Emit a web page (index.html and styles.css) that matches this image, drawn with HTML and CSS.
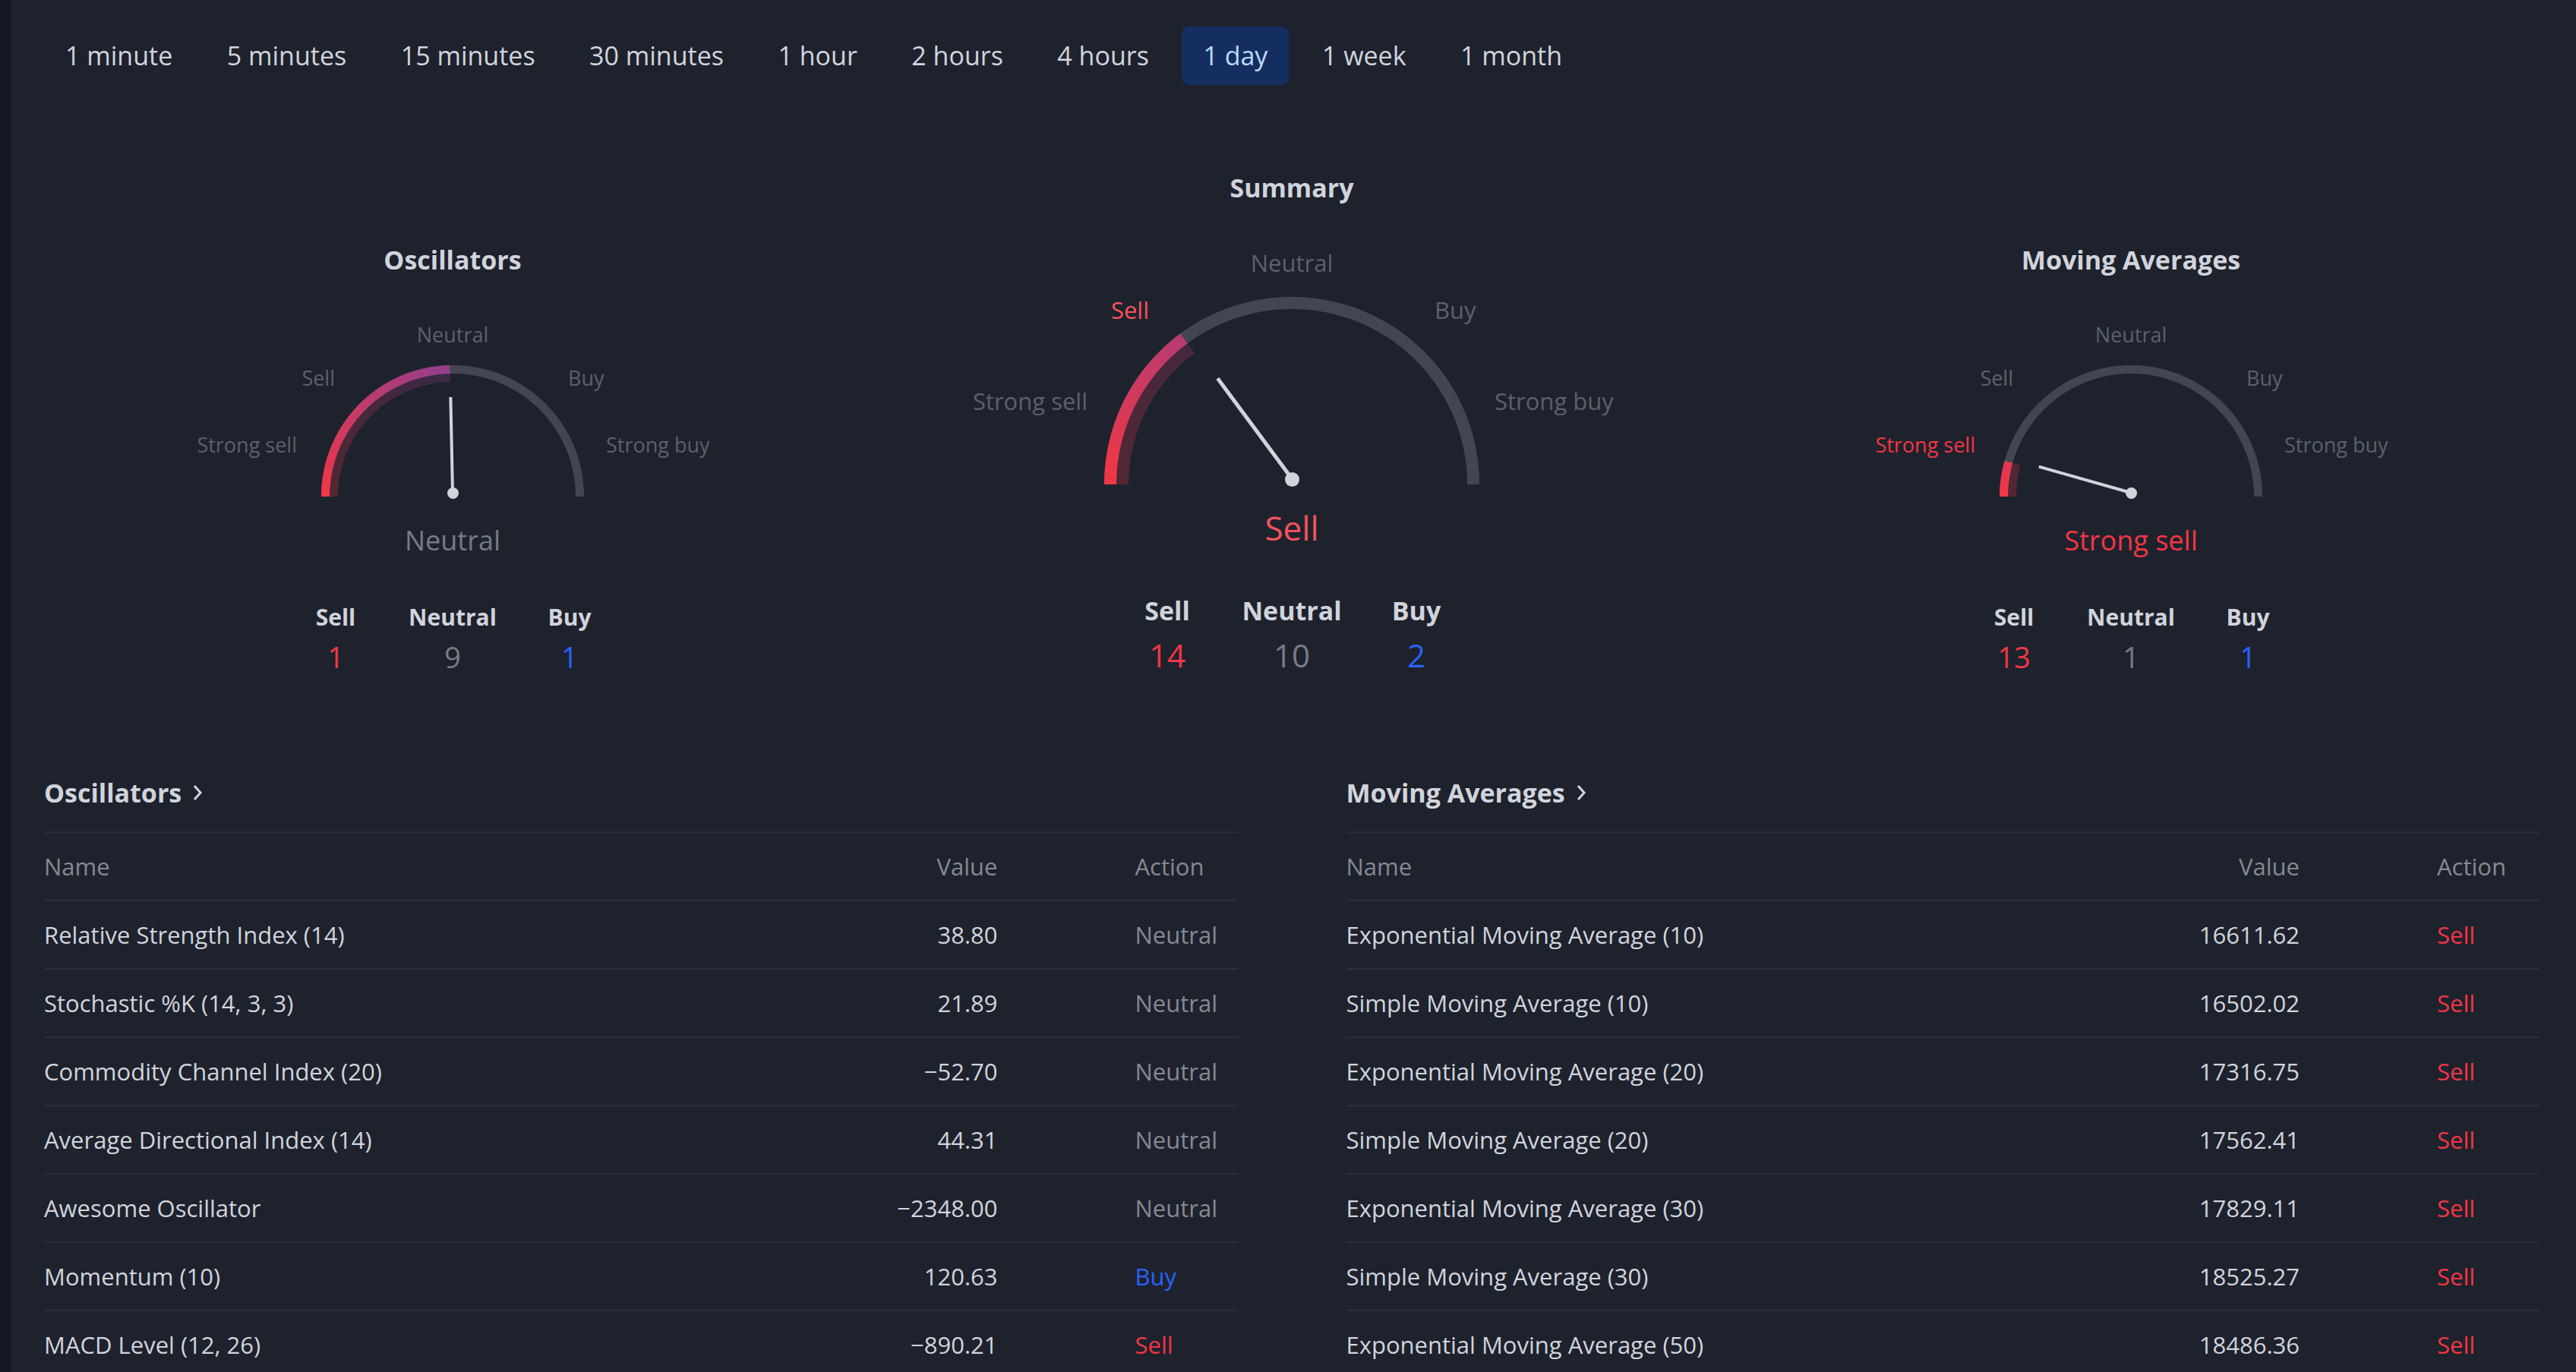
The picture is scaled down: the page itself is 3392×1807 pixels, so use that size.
FILE: index.html
```html
<!DOCTYPE html>
<html lang="en">
<head>
<meta charset="utf-8">
<title>Technical analysis</title>
<link rel="stylesheet" href="styles.css">
</head>
<body>
<div class="app">
  <aside class="strip"></aside>
  <main class="main">
    <nav class="tabs">
      <div class="tab">1 minute</div>
      <div class="tab">5 minutes</div>
      <div class="tab">15 minutes</div>
      <div class="tab">30 minutes</div>
      <div class="tab">1 hour</div>
      <div class="tab">2 hours</div>
      <div class="tab">4 hours</div>
      <div class="tab tab--active">1 day</div>
      <div class="tab">1 week</div>
      <div class="tab">1 month</div>
    </nav>

    <section class="gauges">
      <div class="gauge-col gauge-col--sm">
        <h3 class="gauge-title">Oscillators</h3>
        <div class="gauge" style="--v: 88.8deg">
          <div class="gauge-track"></div>
          <div class="gauge-cut"><div class="gauge-fill"></div></div>
          <span class="gl gl-ss">Strong sell</span>
          <span class="gl gl-s">Sell</span>
          <span class="gl gl-n">Neutral</span>
          <span class="gl gl-b">Buy</span>
          <span class="gl gl-sb">Strong buy</span>
          <div class="needle"></div>
          <div class="pivot"></div>
        </div>
        <div class="gauge-result">Neutral</div>
        <div class="counts">
          <div class="count"><span class="count-label">Sell</span><span class="count-num c-sell">1</span></div>
          <div class="count"><span class="count-label">Neutral</span><span class="count-num c-neutral">9</span></div>
          <div class="count"><span class="count-label">Buy</span><span class="count-num c-buy">1</span></div>
        </div>
      </div>

      <div class="gauge-col gauge-col--lg">
        <h3 class="gauge-title">Summary</h3>
        <div class="gauge" style="--v: 53.5deg">
          <div class="gauge-track"></div>
          <div class="gauge-cut"><div class="gauge-fill"></div></div>
          <span class="gl gl-ss">Strong sell</span>
          <span class="gl gl-s gl--sell">Sell</span>
          <span class="gl gl-n">Neutral</span>
          <span class="gl gl-b">Buy</span>
          <span class="gl gl-sb">Strong buy</span>
          <div class="needle"></div>
          <div class="pivot"></div>
        </div>
        <div class="gauge-result gauge-result--sell">Sell</div>
        <div class="counts">
          <div class="count"><span class="count-label">Sell</span><span class="count-num c-sell">14</span></div>
          <div class="count"><span class="count-label">Neutral</span><span class="count-num c-neutral">10</span></div>
          <div class="count"><span class="count-label">Buy</span><span class="count-num c-buy">2</span></div>
        </div>
      </div>

      <div class="gauge-col gauge-col--sm">
        <h3 class="gauge-title">Moving Averages</h3>
        <div class="gauge" style="--v: 15.8deg">
          <div class="gauge-track"></div>
          <div class="gauge-cut"><div class="gauge-fill"></div></div>
          <span class="gl gl-ss gl--strong-sell">Strong sell</span>
          <span class="gl gl-s">Sell</span>
          <span class="gl gl-n">Neutral</span>
          <span class="gl gl-b">Buy</span>
          <span class="gl gl-sb">Strong buy</span>
          <div class="needle"></div>
          <div class="pivot"></div>
        </div>
        <div class="gauge-result gauge-result--strong-sell">Strong sell</div>
        <div class="counts">
          <div class="count"><span class="count-label">Sell</span><span class="count-num c-sell">13</span></div>
          <div class="count"><span class="count-label">Neutral</span><span class="count-num c-neutral">1</span></div>
          <div class="count"><span class="count-label">Buy</span><span class="count-num c-buy">1</span></div>
        </div>
      </div>
    </section>

    <section class="tables">
      <div class="panel">
        <h3 class="panel-title">Oscillators<svg class="chev" viewBox="0 0 14 22" width="14" height="22"><polyline points="3,2 11,11 3,20" fill="none" stroke="currentColor" stroke-width="3"/></svg></h3>
        <div class="tbl">
          <div class="tr th"><span>Name</span><span class="num">Value</span><span>Action</span></div>
          <div class="tr"><span>Relative Strength Index (14)</span><span class="num">38.80</span><span class="a-neutral">Neutral</span></div>
          <div class="tr"><span>Stochastic %K (14, 3, 3)</span><span class="num">21.89</span><span class="a-neutral">Neutral</span></div>
          <div class="tr"><span>Commodity Channel Index (20)</span><span class="num">−52.70</span><span class="a-neutral">Neutral</span></div>
          <div class="tr"><span>Average Directional Index (14)</span><span class="num">44.31</span><span class="a-neutral">Neutral</span></div>
          <div class="tr"><span>Awesome Oscillator</span><span class="num">−2348.00</span><span class="a-neutral">Neutral</span></div>
          <div class="tr"><span>Momentum (10)</span><span class="num">120.63</span><span class="a-buy">Buy</span></div>
          <div class="tr"><span>MACD Level (12, 26)</span><span class="num">−890.21</span><span class="a-sell">Sell</span></div>
        </div>
      </div>
      <div class="panel">
        <h3 class="panel-title">Moving Averages<svg class="chev" viewBox="0 0 14 22" width="14" height="22"><polyline points="3,2 11,11 3,20" fill="none" stroke="currentColor" stroke-width="3"/></svg></h3>
        <div class="tbl">
          <div class="tr th"><span>Name</span><span class="num">Value</span><span>Action</span></div>
          <div class="tr"><span>Exponential Moving Average (10)</span><span class="num">16611.62</span><span class="a-sell">Sell</span></div>
          <div class="tr"><span>Simple Moving Average (10)</span><span class="num">16502.02</span><span class="a-sell">Sell</span></div>
          <div class="tr"><span>Exponential Moving Average (20)</span><span class="num">17316.75</span><span class="a-sell">Sell</span></div>
          <div class="tr"><span>Simple Moving Average (20)</span><span class="num">17562.41</span><span class="a-sell">Sell</span></div>
          <div class="tr"><span>Exponential Moving Average (30)</span><span class="num">17829.11</span><span class="a-sell">Sell</span></div>
          <div class="tr"><span>Simple Moving Average (30)</span><span class="num">18525.27</span><span class="a-sell">Sell</span></div>
          <div class="tr"><span>Exponential Moving Average (50)</span><span class="num">18486.36</span><span class="a-sell">Sell</span></div>
        </div>
      </div>
    </section>
  </main>
</div>
</body>
</html>
```

FILE: styles.css
```css
* { box-sizing: border-box; }
html, body { margin: 0; padding: 0; }
body {
  background: #1e222d;
  color: #d1d4dc;
  font-family: "Open Sans", "Liberation Sans", sans-serif;
  overflow: hidden;
}
.app { display: flex; min-height: 100vh; }
.strip { width: 14px; flex: none; background: #131722; }
.main { flex: 1; padding: 35px 48px 0 44px; min-width: 0; }

/* tabs */
.tabs { display: flex; gap: 15.5px; }
.tab {
  height: 77px;
  line-height: 77px;
  padding: 0 28px;
  border-radius: 10px;
  font-size: 34px;
  color: #d1d4dc;
  white-space: nowrap;
}
.tab--active { background: #142e61; color: #bbd9fb; }

/* gauges */
.gauges {
  display: grid;
  grid-template-columns: repeat(3, 1fr);
  column-gap: 29px;
  align-items: end;
  margin-top: 115px;
}
.gauge-col { display: flex; flex-direction: column; align-items: center; }
.gauge-title {
  margin: 0;
  font-size: 34px;
  line-height: 40px;
  font-weight: 700;
  color: #d1d4dc;
}
.gauge {
  position: relative;
  width: calc(var(--r) * 2);
  height: var(--r);
}
.gauge-col--sm .gauge { --r: 173px; --t: 11px; margin-top: 119px; }
.gauge-col--lg .gauge { --r: 247px; --t: 16px; margin-top: 124px; }

.gauge-track, .gauge-cut { position: absolute; inset: 0; }
.gauge-track {
  background: #434651;
  -webkit-mask-image: radial-gradient(circle at 50% 100%, transparent calc(var(--r) - var(--t) - 0.5px), #000 calc(var(--r) - var(--t) + 0.5px), #000 calc(var(--r) - 0.5px), transparent calc(var(--r) + 0.5px));
  mask-image: radial-gradient(circle at 50% 100%, transparent calc(var(--r) - var(--t) - 0.5px), #000 calc(var(--r) - var(--t) + 0.5px), #000 calc(var(--r) - 0.5px), transparent calc(var(--r) + 0.5px));
}
.gauge-cut {
  -webkit-mask-image: conic-gradient(from 270deg at 50% 100%, #000 var(--v), transparent var(--v));
  mask-image: conic-gradient(from 270deg at 50% 100%, #000 var(--v), transparent var(--v));
}
.gauge-fill {
  width: 100%;
  height: 100%;
  background: conic-gradient(from 270deg at 50% 100%, #f23645 0deg, #8f3f8e 90deg, #2962ff 180deg);
  -webkit-mask-image: radial-gradient(circle at 50% 100%, transparent calc(var(--r) - 2 * var(--t) - 0.5px), rgba(0,0,0,.25) calc(var(--r) - 2 * var(--t) + 0.5px), rgba(0,0,0,.25) calc(var(--r) - var(--t) - 0.5px), #000 calc(var(--r) - var(--t) + 0.5px), #000 calc(var(--r) - 0.5px), transparent calc(var(--r) + 0.5px));
  mask-image: radial-gradient(circle at 50% 100%, transparent calc(var(--r) - 2 * var(--t) - 0.5px), rgba(0,0,0,.25) calc(var(--r) - 2 * var(--t) + 0.5px), rgba(0,0,0,.25) calc(var(--r) - var(--t) - 0.5px), #000 calc(var(--r) - var(--t) + 0.5px), #000 calc(var(--r) - 0.5px), transparent calc(var(--r) + 0.5px));
}

.gl {
  position: absolute;
  line-height: 1;
  white-space: nowrap;
  color: #5d606b;
}
.gl--sell { color: #f7525f; }
.gl--strong-sell { color: #f23645; }

.gauge-col--sm .gl { font-size: 27px; }
.gauge-col--sm .gl-n { top: -54px; left: 50%; transform: translateX(-50%); }
.gauge-col--sm .gl-s { top: 3px; right: 328px; }
.gauge-col--sm .gl-b { top: 3px; left: 325px; }
.gauge-col--sm .gl-ss { top: 91px; right: 378px; }
.gauge-col--sm .gl-sb { top: 91px; left: 375px; }

.gauge-col--lg .gl { font-size: 31px; }
.gauge-col--lg .gl-n { top: -60px; left: 50%; transform: translateX(-50%); }
.gauge-col--lg .gl-s { top: 2px; right: 435px; }
.gauge-col--lg .gl-b { top: 2px; left: 435px; }
.gauge-col--lg .gl-ss { top: 122px; right: 516px; }
.gauge-col--lg .gl-sb { top: 122px; left: 514px; }

.needle {
  position: absolute;
  left: 50%;
  background: #d1d4dc;
  transform-origin: 50% 100%;
  transform: rotate(calc(var(--v) - 90deg));
}
.pivot {
  position: absolute;
  left: 50%;
  border-radius: 50%;
  background: #d1d4dc;
}
.gauge-col--sm .needle { width: 4px; margin-left: -2px; height: 126px; bottom: 5px; }
.gauge-col--sm .pivot { width: 15px; height: 15px; margin-left: -7.5px; bottom: -2.5px; }
.gauge-col--lg .needle { width: 5px; margin-left: -2.5px; height: 165px; bottom: 7px; }
.gauge-col--lg .pivot { width: 19px; height: 19px; margin-left: -9.5px; bottom: -2.5px; }

.gauge-result { color: #787b86; white-space: nowrap; }
.gauge-result--sell { color: #f7525f; }
.gauge-result--strong-sell { color: #f23645; }
.gauge-col--sm .gauge-result { font-size: 36px; line-height: 44px; margin-top: 36px; }
.gauge-col--lg .gauge-result { font-size: 44px; line-height: 52px; margin-top: 31px; }

.counts { display: grid; }
.count { display: flex; flex-direction: column; align-items: center; }
.count-label { font-weight: 700; color: #d1d4dc; }
.c-sell { color: #f23645; }
.c-neutral { color: #787b86; }
.c-buy { color: #2962ff; }
.gauge-col--sm .counts { grid-template-columns: repeat(3, 154px); margin-top: 61px; }
.gauge-col--sm .count-label { font-size: 30px; line-height: 36px; }
.gauge-col--sm .count-num { font-size: 38px; line-height: 46px; margin-top: 11px; }
.gauge-col--lg .counts { grid-template-columns: repeat(3, 164px); margin-top: 63px; }
.gauge-col--lg .count-label { font-size: 34px; line-height: 40px; }
.gauge-col--lg .count-num { font-size: 42px; line-height: 50px; margin-top: 14px; }

/* tables */
.tables {
  display: grid;
  grid-template-columns: 1fr 1fr;
  column-gap: 143px;
  margin-top: 136px;
}
.panel-title {
  margin: 0;
  padding-bottom: 31px;
  font-size: 34px;
  line-height: 40px;
  font-weight: 700;
  color: #d1d4dc;
  display: flex;
  align-items: center;
}
.chev { margin-left: 14px; color: #d1d4dc; }
.tbl { border-top: 2px solid #2a2e39; }
.tr {
  display: grid;
  grid-template-columns: 1fr 300px 135px;
  column-gap: 181px;
  align-items: center;
  height: 90px;
  border-bottom: 2px solid #2a2e39;
  font-size: 31px;
  color: #d1d4dc;
  white-space: nowrap;
}
.tr .num { text-align: right; }
.th { color: #868993; }
.a-neutral { color: #868993; }
.a-buy { color: #2962ff; }
.a-sell { color: #f23645; }
```
